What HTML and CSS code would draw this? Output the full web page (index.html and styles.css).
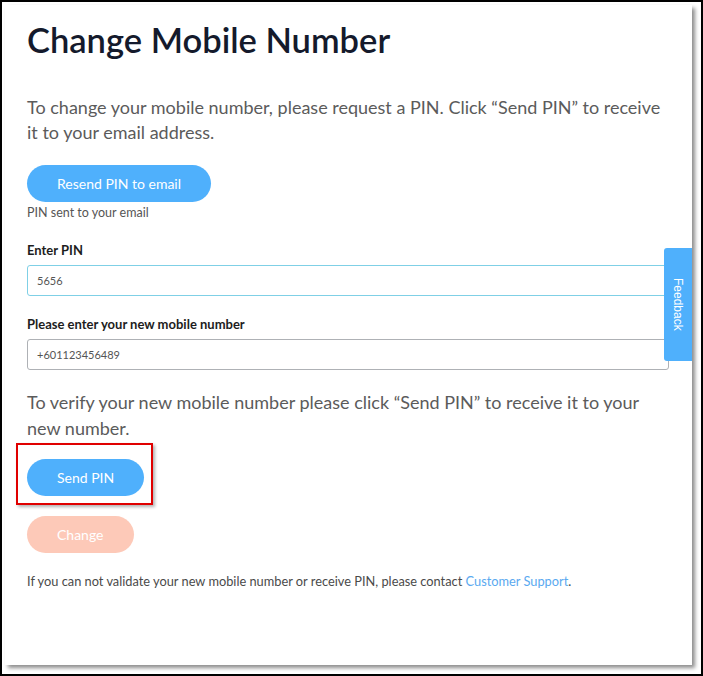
FILE: index.html
```html
<!DOCTYPE html>
<html lang="en">
<head>
    <meta charset="UTF-8">
    <meta name="viewport" content="width=device-width, initial-scale=1.0">
    <title>Change Mobile Number</title>
    <link rel="stylesheet" href="styles.css">
</head>
<body>

<div class="frame">
    <div class="panel">
        <h1>Change Mobile Number</h1>
        <p class="intro">To change your mobile number, please request a PIN. Click “Send PIN” to receive it to your email address.</p>

        <button type="button" class="btn btn-blue">Resend PIN to email</button>
        <div class="hint">PIN sent to your email</div>

        <label for="pin" class="field-label">Enter PIN</label>
        <input type="text" id="pin" class="field field-active" value="5656">

        <label for="mobile" class="field-label second">Please enter your new mobile number</label>
        <input type="text" id="mobile" class="field" value="+601123456489">

        <p class="intro verify">To verify your new mobile number please click “Send PIN” to receive it to your new number.</p>

        <div class="highlight">
            <button type="button" class="btn btn-blue">Send PIN</button>
        </div>

        <button type="button" class="btn btn-peach" disabled>Change</button>

        <p class="footer">If you can not validate your new mobile number or receive PIN, please contact <a href="#">Customer Support</a>.</p>

        <div class="feedback">Feedback</div>
    </div>
</div>

</body>
</html>
```

FILE: styles.css
```css
* {
    box-sizing: border-box;
}
body {
    margin: 0;
    font-family: Lato, "Open Sans", sans-serif;
    background: #fff;
}
.frame {
    width: 703px;
    height: 676px;
    border: 2px solid #000;
    padding: 3px 0 0 3px;
    background: #fff;
}
.panel {
    position: relative;
    width: 687px;
    height: 660px;
    padding: 13px 23px 0 22px;
    background: #fff;
    box-shadow: 3px 3px 4px rgba(0, 0, 0, 0.45);
}
h1 {
    margin: 0;
    font-size: 34.5px;
    line-height: 44px;
    font-weight: 600;
    color: #141a2c;
}
.intro {
    margin: 33px 0 0;
    font-size: 18px;
    line-height: 25px;
    color: #5b5b5b;
}
.intro.verify {
    margin-top: 19px;
    line-height: 26px;
}
.btn {
    display: block;
    height: 37px;
    padding: 0 30px;
    border: none;
    border-radius: 19px;
    font-family: inherit;
    font-size: 14px;
    color: #fff;
    cursor: pointer;
}
.btn-blue {
    margin-top: 20px;
    background-color: #4fb0fc;
}
.btn-peach {
    margin-top: 11px;
    background-color: #fdc9b8;
}
.hint {
    margin-top: 2px;
    font-size: 12.5px;
    line-height: 18px;
    color: #555;
}
.field-label {
    display: block;
    margin-top: 18px;
    font-size: 13px;
    line-height: 20px;
    font-weight: 700;
    color: #1d1d1d;
}
.field-label.second {
    margin-top: 18px;
}
.field {
    display: block;
    width: 100%;
    height: 31px;
    margin-top: 5px;
    padding: 0 9px;
    border: 1px solid #aeb1b5;
    border-radius: 3px;
    font-family: inherit;
    font-size: 11px;
    color: #555;
    outline: none;
}
.field.field-active {
    border: 1px solid #7fd0e6;
}
.highlight {
    display: inline-block;
    margin: 2px 0 0 -11px;
    padding: 14px 7px 7px 9px;
    border: 2px solid #e00000;
    box-shadow: 2px 2px 3px rgba(0, 0, 0, 0.3);
}
.highlight .btn {
    margin-top: 0;
}
.footer {
    margin: 19px 0 0;
    font-size: 12.8px;
    line-height: 18px;
    color: #4a4a4a;
}
.footer a {
    color: #5aa9f0;
    text-decoration: none;
}
.feedback {
    position: absolute;
    top: 243px;
    right: 0;
    width: 28px;
    height: 113px;
    display: flex;
    align-items: center;
    justify-content: center;
    writing-mode: vertical-rl;
    background: #4fb0fc;
    border-radius: 3px 0 0 3px;
    font-family: "Liberation Sans", Arial, sans-serif;
    font-size: 12px;
    color: #fff;
}
```
